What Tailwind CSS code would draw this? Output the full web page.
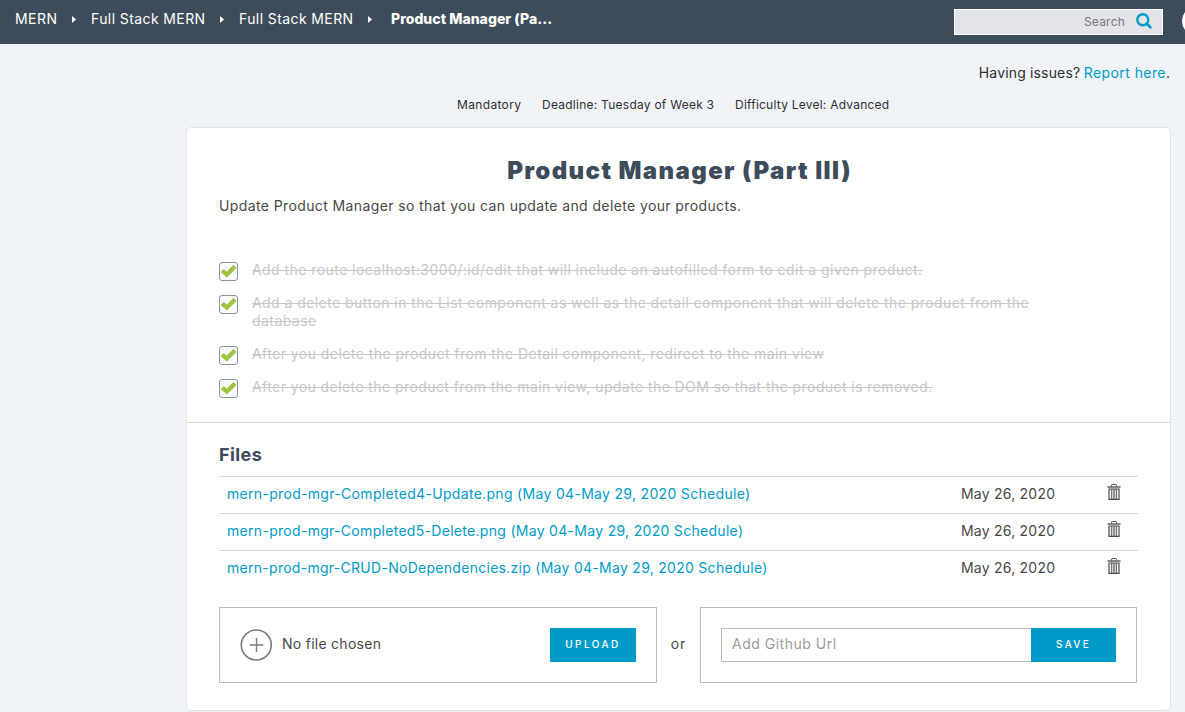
<!DOCTYPE html>
<html lang="en">
<head>
<meta charset="utf-8">
<title>Product Manager (Part III)</title>
<script src="https://cdn.jsdelivr.net/npm/@tailwindcss/browser@4"></script>
</head>
<body class="h-[712px] overflow-hidden bg-[#f0f3f8] font-['Inter',sans-serif] text-sm text-[#484848]">
<svg class="hidden">
  <symbol id="trash" viewBox="0 0 14 16">
    <path d="M4.500 2.500V1.200Q4.500.5 5.200.5H8.800Q9.500.5 9.500 1.200V2.500" fill="none" stroke="#505050"/>
    <path d="M.5 3H13.500" fill="none" stroke="#606060" stroke-width="1.500"/>
    <path d="M2 5H12V15.400H2Z" fill="#fff" stroke="#4a4a4a" stroke-width="1.200"/>
    <path d="M4.400 5V15M6.200 5V15M7.800 5V15M9.600 5V15" stroke="#666" stroke-width="1"/>
  </symbol>
  <symbol id="check" viewBox="0 0 17 17">
    <path d="M1.200 9L3.800 6.500L6.700 9.100L13.600 2.300L16 4.900L6.800 14Z" fill="#9fc63a" stroke="#8bb52c" stroke-width=".7"/>
  </symbol>
</svg>

<header class="flex h-11 overflow-hidden bg-[#3d4c5a] pl-[15px] text-white">
  <nav class="flex h-[38px] w-[939px] shrink-0 items-center whitespace-nowrap">
    <span class="w-[57px] tracking-[.45px]">MERN</span>
    <svg class="h-[7px] w-[19px]" viewBox="0 0 19 7"><path d="M0 0L4 3.500L0 7Z" fill="#fff"/></svg>
    <span class="w-[129px] tracking-[.4px]">Full Stack MERN</span>
    <svg class="h-[7px] w-[19px]" viewBox="0 0 19 7"><path d="M0 0L4 3.500L0 7Z" fill="#fff"/></svg>
    <span class="w-[129px] tracking-[.4px]">Full Stack MERN</span>
    <svg class="h-[7px] w-[23px]" viewBox="0 0 23 7"><path d="M0 0L4 3.500L0 7Z" fill="#fff"/></svg>
    <span class="font-extrabold tracking-[.04px]">Product Manager (Pa...</span>
  </nav>
  <div class="mt-[9px] flex h-[26px] w-[209px] shrink-0 items-center justify-end border border-white bg-[#e2e4e9] pr-2.5 text-xs text-[#777]">
    <span class="tracking-[.2px]">Search</span>
    <svg class="-mt-0.5 ml-[11px] size-4" viewBox="0 0 16 16" fill="none" stroke="#009bc9"><circle cx="6.800" cy="6.700" r="5.500" stroke-width="2.400"/><path d="M10.800 10.700L14.300 14.200" stroke-width="2.800" stroke-linecap="round"/></svg>
  </div>
  <div class="mt-1.5 ml-[18.500px] size-[30px] shrink-0 rounded-full bg-white"></div>
</header>

<div class="flex h-[58px] items-center justify-end pr-[15px] text-[#303030]">
  <span class="w-[105px] tracking-[.16px]">Having issues?</span>
  <a class="tracking-[.42px] text-[#009bc9]">Report here</a><span>.</span>
</div>
<div class="-mt-[7px] flex h-[25px] justify-start pt-px pl-[457px] text-xs leading-[18px] whitespace-nowrap text-[#303030]">
  <span class="w-[85px] tracking-[.34px]">Mandatory</span>
  <span class="w-[193px] tracking-[.25px]">Deadline: Tuesday of Week 3</span>
  <span class="tracking-[.23px]">Difficulty Level: Advanced</span>
</div>

<main class="mt-[7px] ml-[186px] h-[584px] w-[985px] rounded-[5px] border border-[#e0e5ea] bg-white">
  <section class="h-[295px] border-b border-[#d8d8d8] px-8 pt-[26px]">
    <h1 class="pl-[2px] text-center text-2xl leading-[34px] font-black tracking-[1.380px] text-[#3d4c5a]">Product Manager (Part III)</h1>
    <p class="mt-[9px] leading-[18px] tracking-[.385px]">Update Product Manager so that you can update and delete your products.</p>
    <ul class="mt-[46px] flex flex-col gap-[15px] leading-[18px] text-[#c8c8c8]">
      <li class="flex gap-3.5">
        <span class="mt-px -mb-1 size-[19px] shrink-0 rounded-[3px] border border-[#8a959d] bg-[#f8faff]"><svg class="size-[17px]"><use href="#check"/></svg></span>
        <span class="tracking-[.44px] line-through">Add the route localhost:3000/:id/edit that will include an autofilled form to edit a given product.</span>
      </li>
      <li class="flex gap-3.5">
        <span class="mt-px -mb-1 size-[19px] shrink-0 rounded-[3px] border border-[#8a959d] bg-[#f8faff]"><svg class="size-[17px]"><use href="#check"/></svg></span>
        <span class="tracking-[.44px] line-through">Add a delete button in the List component as well as the detail component that will delete the product from the<br>database</span>
      </li>
      <li class="flex gap-3.5">
        <span class="mt-px -mb-1 size-[19px] shrink-0 rounded-[3px] border border-[#8a959d] bg-[#f8faff]"><svg class="size-[17px]"><use href="#check"/></svg></span>
        <span class="tracking-[.44px] line-through">After you delete the product from the Detail component, redirect to the main view</span>
      </li>
      <li class="flex gap-3.5">
        <span class="mt-px -mb-1 size-[19px] shrink-0 rounded-[3px] border border-[#8a959d] bg-[#f8faff]"><svg class="size-[17px]"><use href="#check"/></svg></span>
        <span class="tracking-[.42px] line-through">After you delete the product from the main view, update the DOM so that the product is removed.</span>
      </li>
    </ul>
  </section>
  <section class="px-8 pt-5">
    <h2 class="h-[33px] text-lg leading-6 font-bold tracking-[.4px] text-[#3d4c5a]">Files</h2>
    <div class="w-[919px]">
      <div class="flex h-[37px] items-start border-t border-[#d8d8d8] pt-2 pl-2 leading-[18px]">
        <a class="w-[734px] tracking-[.315px] text-[#009bc9]">mern-prod-mgr-Completed4-Update.png (May 04-May 29, 2020 Schedule)</a>
        <span class="w-[146px] tracking-[.22px]">May 26, 2020</span>
        <svg class="-mt-px h-4 w-3.5"><use href="#trash"/></svg>
      </div>
      <div class="flex h-[37px] items-start border-t border-[#d8d8d8] pt-2 pl-2 leading-[18px]">
        <a class="w-[734px] tracking-[.3px] text-[#009bc9]">mern-prod-mgr-Completed5-Delete.png (May 04-May 29, 2020 Schedule)</a>
        <span class="w-[146px] tracking-[.22px]">May 26, 2020</span>
        <svg class="-mt-px h-4 w-3.5"><use href="#trash"/></svg>
      </div>
      <div class="flex h-[37px] items-start border-t border-[#d8d8d8] pt-2 pl-2 leading-[18px]">
        <a class="w-[734px] tracking-[.28px] text-[#009bc9]">mern-prod-mgr-CRUD-NoDependencies.zip (May 04-May 29, 2020 Schedule)</a>
        <span class="w-[146px] tracking-[.22px]">May 26, 2020</span>
        <svg class="-mt-px h-4 w-3.5"><use href="#trash"/></svg>
      </div>
    </div>
    <div class="mt-5 flex h-[76px] w-[918px] items-center">
      <div class="flex h-[76px] w-[438px] items-center border border-[#bcbcbc] px-5">
        <svg class="size-8.5" viewBox="0 0 34 34" fill="none" stroke="#7c7c7c"><circle cx="16.300" cy="17" r="15" stroke-width="1.600"/><path d="M9.500 17H23.500M16.500 10V24" stroke-width="1.400"/></svg>
        <span class="-mt-0.5 ml-2 tracking-[.27px]">No file chosen</span>
        <button class="ml-auto h-[34px] w-[86px] bg-[#009bc9] pb-0.5 text-[10px] font-medium tracking-[2.450px] text-white">UPLOAD</button>
      </div>
      <span class="-mt-0.5 w-[43px] text-center tracking-[.8px]">or</span>
      <div class="flex h-[76px] w-[437px] items-center border border-[#bcbcbc] px-5">
        <div class="flex h-[34px] w-[310px] items-center border border-r-0 border-[#bcbcbc] pb-0.5 pl-2.5 tracking-[.5px] text-[#9a9a9a]">Add Github Url</div>
        <button class="h-[34px] w-[85px] bg-[#009bc9] pb-0.5 text-[10px] font-medium tracking-[2.300px] text-white">SAVE</button>
      </div>
    </div>
  </section>
</main>
</body>
</html>
